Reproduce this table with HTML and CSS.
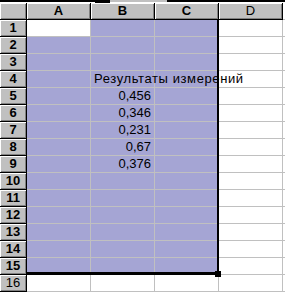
FILE: index.html
```html
<!DOCTYPE html>
<html lang="ru">
<head>
    <meta charset="utf-8">
    <title>Лист1</title>
    <link rel="stylesheet" href="styles.css">
</head>
<body>
    <!-- bottom edge of the formula bar -->
    <div class="bar-edge">
        <span class="edge-line"></span>
        <span class="edge-block"></span>
        <span class="edge-gap"></span>
        <span class="edge-line edge-fill"></span>
    </div>

    <div class="sheet">
        <div class="row">
            <div class="hd corner"></div>
            <div class="hd col bold">A</div>
            <div class="hd col bold">B</div>
            <div class="hd col bold">C</div>
            <div class="hd col">D</div>
            <div class="edge"></div>
        </div>
        <div class="row">
            <div class="hd num bold">1</div>
            <div class="cell"></div><div class="cell sel"></div><div class="cell sel"></div><div class="cell"></div><div class="edge"></div>
        </div>
        <div class="row">
            <div class="hd num bold">2</div>
            <div class="cell sel"></div><div class="cell sel"></div><div class="cell sel"></div><div class="cell"></div><div class="edge"></div>
        </div>
        <div class="row">
            <div class="hd num bold">3</div>
            <div class="cell sel"></div><div class="cell sel"></div><div class="cell sel"></div><div class="cell"></div><div class="edge"></div>
        </div>
        <div class="row">
            <div class="hd num bold">4</div>
            <div class="cell sel"></div>
            <div class="cell sel"><span class="label">Результаты измерений</span></div>
            <div class="cell sel"></div><div class="cell"></div><div class="edge"></div>
        </div>
        <div class="row">
            <div class="hd num bold">5</div>
            <div class="cell sel"></div><div class="cell sel value">0,456</div><div class="cell sel"></div><div class="cell"></div><div class="edge"></div>
        </div>
        <div class="row">
            <div class="hd num bold">6</div>
            <div class="cell sel"></div><div class="cell sel value">0,346</div><div class="cell sel"></div><div class="cell"></div><div class="edge"></div>
        </div>
        <div class="row">
            <div class="hd num bold">7</div>
            <div class="cell sel"></div><div class="cell sel value">0,231</div><div class="cell sel"></div><div class="cell"></div><div class="edge"></div>
        </div>
        <div class="row">
            <div class="hd num bold">8</div>
            <div class="cell sel"></div><div class="cell sel value">0,67</div><div class="cell sel"></div><div class="cell"></div><div class="edge"></div>
        </div>
        <div class="row">
            <div class="hd num bold">9</div>
            <div class="cell sel"></div><div class="cell sel value">0,376</div><div class="cell sel"></div><div class="cell"></div><div class="edge"></div>
        </div>
        <div class="row">
            <div class="hd num bold">10</div>
            <div class="cell sel"></div><div class="cell sel"></div><div class="cell sel"></div><div class="cell"></div><div class="edge"></div>
        </div>
        <div class="row">
            <div class="hd num bold">11</div>
            <div class="cell sel"></div><div class="cell sel"></div><div class="cell sel"></div><div class="cell"></div><div class="edge"></div>
        </div>
        <div class="row">
            <div class="hd num bold">12</div>
            <div class="cell sel"></div><div class="cell sel"></div><div class="cell sel"></div><div class="cell"></div><div class="edge"></div>
        </div>
        <div class="row">
            <div class="hd num bold">13</div>
            <div class="cell sel"></div><div class="cell sel"></div><div class="cell sel"></div><div class="cell"></div><div class="edge"></div>
        </div>
        <div class="row">
            <div class="hd num bold">14</div>
            <div class="cell sel"></div><div class="cell sel"></div><div class="cell sel"></div><div class="cell"></div><div class="edge"></div>
        </div>
        <div class="row">
            <div class="hd num bold">15</div>
            <div class="cell sel"></div><div class="cell sel"></div><div class="cell sel"></div><div class="cell"></div><div class="edge"></div>
        </div>
        <div class="row">
            <div class="hd num">16</div>
            <div class="cell"></div><div class="cell"></div><div class="cell"></div><div class="cell"></div><div class="edge"></div>
        </div>

        <!-- selection frame A1:C15 with fill handle -->
        <div class="sel-frame"><span class="fill-handle"></span></div>
    </div>
</body>
</html>
```

FILE: styles.css
```css
body {
    margin: 0;
    background-color: #fff;
    font-family: "Liberation Sans", Arial, sans-serif;
    font-size: 13px;
    overflow: hidden;
}

.bar-edge {
    display: flex;
    align-items: flex-start;
    height: 3px;
}

.edge-line {
    width: 95px;
    height: 2px;
    background-color: #000;
}

.edge-block {
    width: 15px;
    height: 3px;
    background-color: #000;
}

.edge-gap {
    width: 57px;
    height: 2px;
    background-color: #c0c0c0;
}

.edge-fill {
    flex: 1;
}

.sheet {
    position: relative;
}

.row {
    display: grid;
    grid-template-columns: 27px repeat(4, 64px) 1fr;
    height: 17px;
}

.hd {
    box-sizing: border-box;
    background-color: #c0c0c0;
    border-right: 1px solid #000;
    border-bottom: 1px solid #000;
    box-shadow: inset 1px 1px #fff, inset -1px -1px #808080;
    text-align: center;
    line-height: 16px;
    color: #000;
}

.bold {
    font-weight: bold;
}

.cell {
    box-sizing: border-box;
    border-right: 1px solid #c0c0c0;
    border-bottom: 1px solid #c0c0c0;
    line-height: 16px;
    white-space: nowrap;
}

.cell.sel {
    background-color: #a5a5d4;
}

.value {
    text-align: right;
    padding-right: 3px;
}

.label {
    position: relative;
    z-index: 1;
    padding-left: 3px;
    letter-spacing: 0.6px;
}

.edge {
    border-bottom: 1px solid #c0c0c0;
}

.sel-frame {
    position: absolute;
    left: 27px;
    top: 17px;
    width: 190px;
    height: 252px;
    border-right: 2px solid #000;
    border-bottom: 3px solid #000;
}

.fill-handle {
    position: absolute;
    right: -4px;
    bottom: -5px;
    width: 6px;
    height: 6px;
    background-color: #000;
}
```
